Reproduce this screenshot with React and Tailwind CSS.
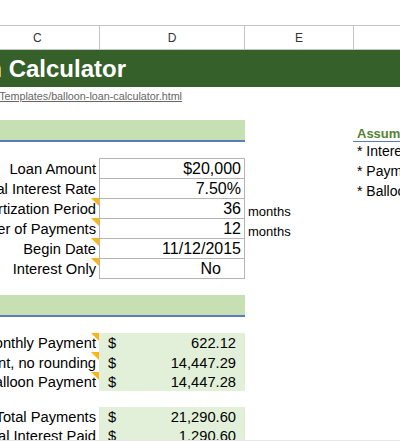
import React from 'react';

const font = { fontFamily: '"Liberation Sans", Arial, sans-serif' };

function Corner() {
  return (
    <svg className="absolute right-0 top-0" width="8" height="8" viewBox="0 0 8 8">
      <polygon points="0,0 8,0 8,8" fill="#fbb416" />
    </svg>
  );
}

function Label({ text, note }) {
  return (
    <div className="relative w-[99px] shrink-0 flex items-center justify-end pr-[3px] pt-[2px] whitespace-nowrap">
      {text}
      {note && <Corner />}
    </div>
  );
}

function Input({ label, value, note, unit, inset }) {
  return (
    <div className="flex h-5">
      <Label text={label} note={note} />
      <div className={`w-[146px] shrink-0 border-l border-r border-t border-[#b5b5b5] flex items-center justify-end text-[16px] ${inset ? 'pr-[23px]' : 'pr-[3px]'}`}>
        {value}
      </div>
      {unit && <div className="pl-[3px] pt-[7px] text-[13px]">{unit}</div>}
    </div>
  );
}

function Result({ label, value, note }) {
  return (
    <div className="flex flex-1">
      <Label text={label} note={note} />
      <div className="w-[146px] shrink-0 bg-[#e2f0d9] flex items-center justify-between pl-[9px] pr-[9px] pt-[2px]">
        <span>$</span>
        <span>{value}</span>
      </div>
    </div>
  );
}

function Band() {
  return <div className="h-[22px] w-[245px] bg-[#c6e0b4] border-b-2 border-[#5b7cbb]" />;
}

export default function App() {
  return (
    <div className="w-[400px] h-[441px] overflow-hidden bg-white text-[14.7px] leading-none text-black" style={font}>
      <div className="h-[440px] overflow-hidden">
        {/* COLUMN HEADERS */}
        <div className="mt-[25px] h-[25px] flex border-t border-b border-[#c4c4c4] text-[12px] text-[#333]">
          <div className="w-[100px] border-r border-[#c4c4c4] flex items-center pl-[33px]">C</div>
          <div className="w-[145px] border-r border-[#c4c4c4] flex items-center justify-center">D</div>
          <div className="w-[109px] border-r border-[#c4c4c4] flex items-center justify-center">E</div>
        </div>

        {/* TITLE */}
        <div className="h-[37px] bg-[#366029] flex items-center">
          <div className="w-[126px] shrink-0 flex justify-end whitespace-nowrap text-[24px] font-bold text-white">
            <span>Balloon Loan Calculator</span>
          </div>
        </div>

        {/* LINK */}
        <div className="h-[33px] w-[182px] flex justify-end whitespace-nowrap pt-[4px] text-[10.75px] text-[#666]">
          <span className="underline">https://www.vertex42.com/ExcelTemplates/balloon-loan-calculator.html</span>
        </div>

        <div className="flex">
          <div className="w-[353px] shrink-0">
            <Band />

            <div className="mt-[16px] w-[353px]">
              <Input label="Loan Amount" value="$20,000" />
              <Input label="Annual Interest Rate" value="7.50%" />
              <Input label="Amortization Period" value="36" note unit="months" />
              <Input label="Number of Payments" value="12" note unit="months" />
              <Input label="Begin Date" value="11/12/2015" note />
              <Input label="Interest Only" value="No" note inset />
              <div className="ml-[99px] w-[146px] border-t border-[#b5b5b5]" />
            </div>

            <div className="mt-[16px]">
              <Band />
            </div>

            <div className="mt-[16px] h-[58px] flex flex-col">
              <Result label="Monthly Payment" value="622.12" note />
              <Result label="Balloon Payment, no rounding" value="14,447.29" note />
              <Result label="Balloon Payment" value="14,447.28" note />
            </div>

            <div className="mt-[16px] h-[38px] flex flex-col">
              <Result label="Total Payments" value="21,290.60" />
              <Result label="Total Interest Paid" value="1,290.60" />
            </div>
          </div>

          {/* ASSUMPTIONS */}
          <div className="w-[47px] shrink-0 overflow-hidden whitespace-nowrap text-[14px]">
            <div className="h-[22px] pl-[4px] pt-[7px] border-b border-[#5b7cbb] font-bold text-[13px] text-[#548235]">Assumptions</div>
            <div className="pl-[4px] h-5 pt-[2px]">* Interest</div>
            <div className="pl-[4px] h-5 pt-[2px]">* Payments</div>
            <div className="pl-[4px] h-5 pt-[2px]">* Balloon</div>
          </div>
        </div>
      </div>
      <div className="h-px bg-[#e6e6e6]" />
    </div>
  );
}
